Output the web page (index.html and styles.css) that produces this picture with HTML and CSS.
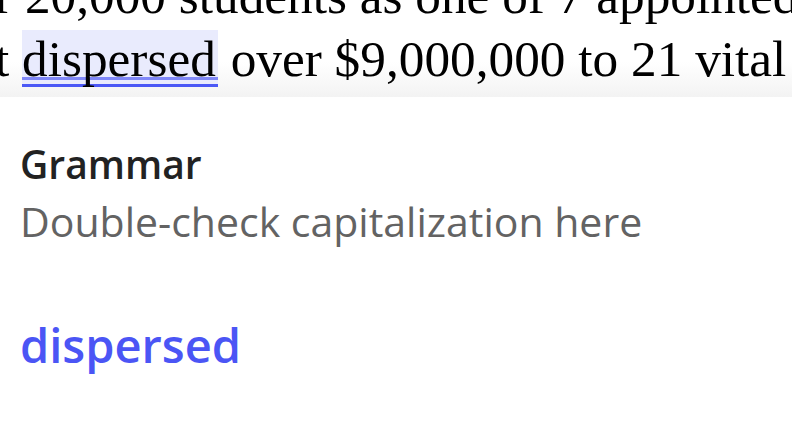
FILE: index.html
```html
<!DOCTYPE html>
<html lang="en">
<head>
<meta charset="utf-8">
<title>Grammar suggestion</title>
<link rel="stylesheet" href="styles.css">
</head>
<body>
<div class="doc">
  <div class="doc-line">r 20,000 students as one of 7 appointed</div>
  <div class="doc-line">t <span class="flagged">dispersed</span> over $9,000,000 to 21 vital</div>
</div>
<div class="card">
  <div class="card-title">Grammar</div>
  <div class="card-desc">Double-check capitalization here</div>
  <div class="card-suggest">dispersed</div>
</div>
</body>
</html>
```
FILE: styles.css
```css
html, body {
  margin: 0;
  padding: 0;
  background: #ffffff;
  overflow: hidden;
}

.doc {
  height: 97px;
  overflow: hidden;
  background: linear-gradient(to bottom, #ffffff 0px, #ffffff 62px, #f3f3f3 97px);
  font-family: "Liberation Serif", "Times New Roman", serif;
  font-size: 51.3px;
  line-height: 63px;
  color: #000;
}

.doc-line {
  white-space: nowrap;
  margin-left: -5px;
}

.doc-line:first-child {
  margin-top: -36px;
}

.flagged {
  padding-right: 2px;
  background:
    linear-gradient(#4b58f6, #4b58f6) left bottom / 100% 3px no-repeat,
    linear-gradient(#7f87f8, #7f87f8) left calc(100% - 7px) / 100% 3px no-repeat,
    #e9ebfd;
}

.card {
  font-family: "Open Sans", "Noto Sans", sans-serif;
  padding: 0 20px;
}

.card-title {
  margin-top: 41px;
  font-size: 39px;
  font-weight: 600;
  line-height: 52px;
  color: #222222;
}

.card-desc {
  margin-top: 5px;
  font-size: 41px;
  line-height: 52px;
  color: #636363;
}

.card-suggest {
  margin-top: 68px;
  font-size: 47px;
  font-weight: 600;
  line-height: 60px;
  color: #4b55f5;
}
```
